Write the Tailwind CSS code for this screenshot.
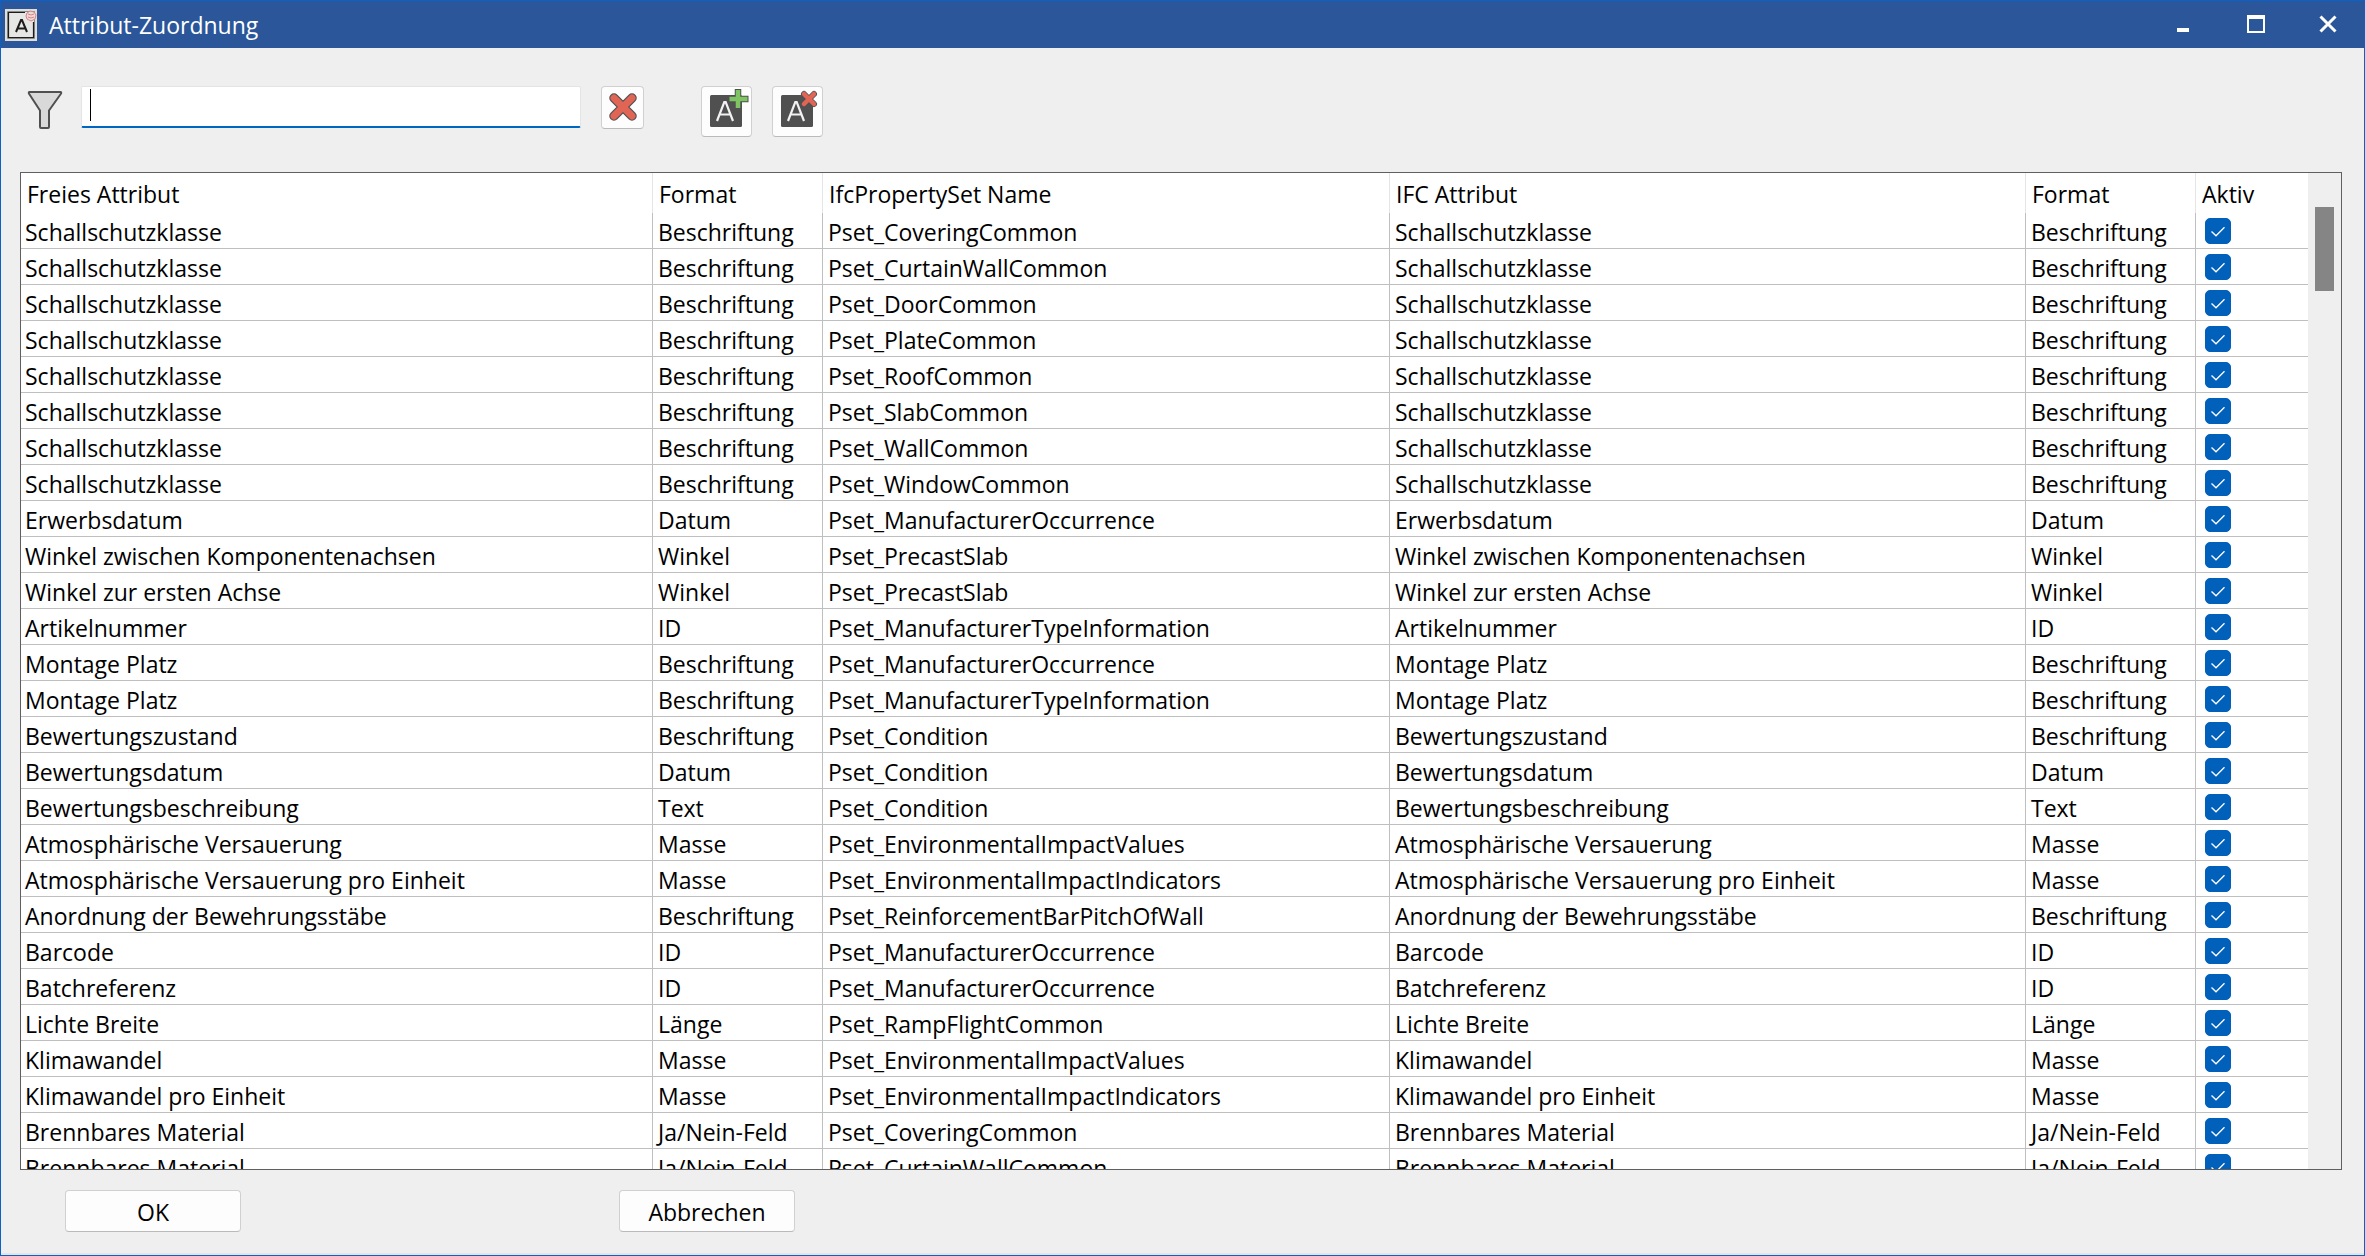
<!DOCTYPE html>
<html lang="de">
<head>
<meta charset="utf-8">
<title>Attribut-Zuordnung</title>
<script src="https://cdn.jsdelivr.net/npm/@tailwindcss/browser@4"></script>
</head>
<body class="h-screen overflow-hidden bg-[#efefef] text-black font-['Open_Sans','Noto_Sans',sans-serif] text-[23px] leading-8">
<div class="flex h-full flex-col border border-[#0a62c9]">
  <header class="flex h-[47px] shrink-0 items-center bg-[#2b579a] pl-1 text-white">
    <svg class="size-8 shrink-0" viewBox="0 0 32 32" aria-hidden="true">
      <path fill="#dededc" d="M0 0h32v32H0z"/>
      <path fill="#e6e6e4" stroke="#8a8a88" d="M2.500 2.500h27v27h-27z"/>
      <path fill="none" stroke="#1c1c1c" stroke-width="1.200" d="M20 3.500H3.500v25h25V13"/>
      <path fill="none" stroke="#1c1c1c" stroke-width="2" d="m11 23 5-12h1l5 12M12.500 19.500h8"/>
      <path fill="#e6dcda" stroke="#e08080" d="m22 4 3-2 4 1 2 3-1 4-4 2-4-2-1-3zM23 5l3 1 3-1M23 8l3 1 3-1"/>
    </svg>
    <h1 class="ml-3 grow">Attribut-Zuordnung</h1>
    <button aria-label="Minimieren" class="grid h-full w-[73px] place-items-center"><svg class="size-6" viewBox="0 0 24 24"><path fill="#fff" d="M6 15h12v4H6z"/></svg></button>
    <button aria-label="Maximieren" class="grid h-full w-[73px] place-items-center"><svg class="size-6" viewBox="0 0 24 24"><path fill="#fff" fill-rule="evenodd" d="M3 2h18v18H3zM5 6v12h14V6z"/></svg></button>
    <button aria-label="Schließen" class="grid h-full w-[72px] place-items-center"><svg class="size-6" viewBox="0 0 24 24"><path fill="none" stroke="#fff" stroke-width="3" d="m4.500 3.500 15 15m0-15-15 15"/></svg></button>
  </header>

  <div class="flex h-[124px] shrink-0 items-start pt-[38px] pl-[26px]">
    <svg class="mt-1 h-10 w-9 shrink-0" viewBox="0 0 36 40" aria-hidden="true"><path fill="#d9d9d9" stroke="#505050" stroke-width="2" stroke-linejoin="round" d="M2.500 2h31q1 0 .6 1.500L22 20.500V37q0 1-1 1h-7q-1 0-1-1V20.500L1.900 3.500Q1.500 2 2.500 2z"/></svg>
    <div class="relative ml-[18px] w-[500px]">
      <input type="text" aria-label="Filter" class="block h-[42px] w-full rounded-xs border border-b-2 border-[#e4e4e4] border-b-[#0067c0] bg-white px-2 caret-transparent outline-none">
      <span class="absolute top-[3px] left-[9px] h-8 w-px bg-black"></span>
    </div>
    <button aria-label="Filter löschen" class="ml-5 grid size-[43px] place-items-center rounded-sm border border-[#d0d0d0] border-b-[#bababa] bg-[#fdfdfd]">
      <svg class="size-[30px]" viewBox="0 0 30 30"><g fill="none" stroke-linecap="round"><path stroke="#505050" stroke-width="9.500" d="m6 5 18 18m0-18L6 23"/><path stroke="#e06555" stroke-width="7" d="m6 5 18 18m0-18L6 23"/></g></svg>
    </button>
    <button aria-label="Attribut hinzufügen" class="ml-[57px] grid size-[51px] place-items-center rounded-sm border border-[#d0d0d0] border-b-[#bababa] bg-[#fdfdfd]">
      <svg class="size-[49px]" viewBox="0 0 49 49"><rect x="8" y="8" width="32" height="32" rx="1.500" fill="#505050"/><path fill="none" stroke="#f2f2f2" stroke-width="2.200" d="M15 34 22.300 15h1.400L31 34M17.700 27.500h10.600"/><g fill="none"><path stroke="#505050" stroke-width="6.500" d="M36 2v20M26.500 12h20"/><path stroke="#7ec463" stroke-width="4.500" d="M36 3v18M27.500 12h18"/></g></svg>
    </button>
    <button aria-label="Attribut entfernen" class="ml-5 grid size-[51px] place-items-center rounded-sm border border-[#d0d0d0] border-b-[#bababa] bg-[#fdfdfd]">
      <svg class="size-[49px]" viewBox="0 0 49 49"><rect x="8" y="8" width="32" height="32" rx="1.500" fill="#505050"/><path fill="none" stroke="#f2f2f2" stroke-width="2.200" d="M15 34 22.300 15h1.400L31 34M17.700 27.500h10.600"/><g fill="none" stroke-linecap="round"><path stroke="#505050" stroke-width="6" d="m31 7 10 10m0-10L31 17"/><path stroke="#e06555" stroke-width="4.500" d="m31 7 10 10m0-10L31 17"/></g></svg>
    </button>
  </div>

  <main class="mr-[22px] ml-[19px] flex min-h-0 grow border border-[#5f5f5f]">
    <div class="grow overflow-hidden bg-white">
      <table class="w-full table-fixed border-separate border-spacing-0 text-left whitespace-nowrap">
        <colgroup><col class="w-[632px]"><col class="w-[170px]"><col class="w-[567px]"><col class="w-[636px]"><col class="w-[170px]"><col class="w-[112px]"></colgroup>
        <thead>
          <tr class="h-10 *:border-r *:border-[#e5e5e5] *:p-0 *:pt-0.5 *:pl-1.5 *:font-normal *:last:border-r-0">
            <th scope="col">Freies Attribut</th><th scope="col">Format</th><th scope="col">IfcPropertySet Name</th><th scope="col">IFC Attribut</th><th scope="col">Format</th><th scope="col">Aktiv</th>
          </tr>
        </thead>
        <tbody id="rows"></tbody>
      </table>
    </div>
    <div class="w-[33px] shrink-0 bg-[#efefef] pt-[34px] pl-[7px]"><div class="h-[84px] w-[19px] bg-[#858585]"></div></div>
  </main>

  <footer class="flex h-[85px] shrink-0 items-start gap-[378px] border-b-2 border-[#e5e5e5] pt-5 pl-16">
    <button class="h-[42px] w-44 rounded-sm border border-[#d0d0d0] border-b-[#bababa] bg-[#fdfdfd] pt-0.5">OK</button>
    <button class="h-[42px] w-44 rounded-sm border border-[#d0d0d0] border-b-[#bababa] bg-[#fdfdfd] pt-0.5">Abbrechen</button>
  </footer>
</div>
<script>
const data = [
  ...["Covering", "CurtainWall", "Door", "Plate", "Roof", "Slab", "Wall", "Window"].map(n => ["Schallschutzklasse", "Beschriftung", n + "Common"]),
  ["Erwerbsdatum", "Datum", "ManufacturerOccurrence"],
  ["Winkel zwischen Komponentenachsen", "Winkel", "PrecastSlab"],
  ["Winkel zur ersten Achse", "Winkel", "PrecastSlab"],
  ["Artikelnummer", "ID", "ManufacturerTypeInformation"],
  ["Montage Platz", "Beschriftung", "ManufacturerOccurrence"],
  ["Montage Platz", "Beschriftung", "ManufacturerTypeInformation"],
  ["Bewertungszustand", "Beschriftung", "Condition"],
  ["Bewertungsdatum", "Datum", "Condition"],
  ["Bewertungsbeschreibung", "Text", "Condition"],
  ["Atmosphärische Versauerung", "Masse", "EnvironmentalImpactValues"],
  ["Atmosphärische Versauerung pro Einheit", "Masse", "EnvironmentalImpactIndicators"],
  ["Anordnung der Bewehrungsstäbe", "Beschriftung", "ReinforcementBarPitchOfWall"],
  ["Barcode", "ID", "ManufacturerOccurrence"],
  ["Batchreferenz", "ID", "ManufacturerOccurrence"],
  ["Lichte Breite", "Länge", "RampFlightCommon"],
  ["Klimawandel", "Masse", "EnvironmentalImpactValues"],
  ["Klimawandel pro Einheit", "Masse", "EnvironmentalImpactIndicators"],
  ["Brennbares Material", "Ja/Nein-Feld", "CoveringCommon"],
  ["Brennbares Material", "Ja/Nein-Feld", "CurtainWallCommon"]
];
document.getElementById("rows").innerHTML = data.map(([name, format, set]) => `
  <tr class="h-9 *:border-r *:border-b *:border-[#bfbfbf] *:p-0 *:pt-0.5 *:pl-[5px] *:first:pl-1 *:last:border-r-0 *:last:pt-0">
    <td>${name}</td><td>${format}</td><td>Pset_${set}</td><td>${name}</td><td>${format}</td>
    <td><label class="ml-1 grid size-[26px] place-items-center">
      <input type="checkbox" checked aria-label="${name} Pset_${set} aktiv" class="size-[26px] appearance-none rounded-[5px] border border-[#0060ba] bg-white [grid-area:1/1] checked:bg-[#0060ba]">
      <svg class="pointer-events-none size-[26px] [grid-area:1/1]" viewBox="0 0 26 26" aria-hidden="true"><path fill="none" stroke="#fff" stroke-width="1.300" d="m6.500 13.500 4.500 4.300 8.500-8.500"/></svg>
    </label></td>
  </tr>`).join("");
</script>
</body>
</html>
